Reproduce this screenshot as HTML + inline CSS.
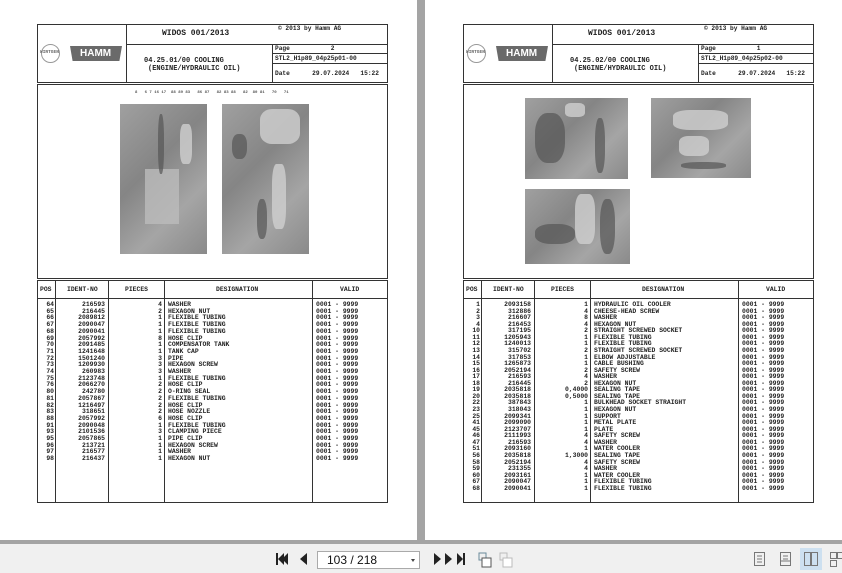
<!DOCTYPE html>
<html><head><meta charset="utf-8"><style>
*{margin:0;padding:0;box-sizing:border-box}
body{width:842px;height:573px;background:#fff;position:relative;overflow:hidden;font-family:"Liberation Mono",monospace}
.pg{position:absolute;top:0;width:416px;height:540px;background:#fff}
.a{position:absolute}
.b{position:absolute;border:1.3px solid #333}
.l{position:absolute;background:#333}
.t{position:absolute;font-weight:bold;font-size:6.4px;color:#222;white-space:pre;line-height:6.7px}
.h{position:absolute;font-weight:bold;color:#222;white-space:pre}
.ph{position:absolute;background:linear-gradient(135deg,#a0a0a0,#858585 40%,#a5a5a5 70%,#8a8a8a);}
.ph i{position:absolute;background:#555;border-radius:40%;opacity:.7}
.ph u{position:absolute;background:#d0d0d0;border-radius:30%;opacity:.8}
.tb{position:absolute;left:0;top:544px;width:842px;height:29px;background:#f0f0f0}
</style></head><body>

<div class="a" style="left:417px;top:0;width:8px;height:543px;background:#a4a4a4"></div>
<div class="a" style="left:0;top:540px;width:842px;height:4px;background:#a4a4a4"></div>

<!-- LEFT PAGE -->
<div class="pg" style="left:0">
 <div class="b" style="left:37px;top:24px;width:351px;height:59px"></div>
 <div class="l" style="left:126px;top:24px;width:1.3px;height:59px"></div>
 <div class="l" style="left:126px;top:44px;width:262px;height:1.3px"></div>
 <div class="l" style="left:272px;top:44px;width:1.3px;height:39px"></div>
 <div class="l" style="left:272px;top:53px;width:116px;height:1px"></div>
 <div class="l" style="left:272px;top:63px;width:116px;height:1px"></div>
 <div class="a" style="left:41px;top:44px;width:19px;height:19px;border:1px solid #999;border-radius:50%"></div>
 <div class="h" style="left:40px;top:50px;font-size:4.5px;color:#666">WIRTGEN</div>
 <div class="a" style="left:70px;top:46px;width:52px;height:15px;background:#6a6a6a;clip-path:polygon(0 0,100% 0,95% 100%,5% 100%)"></div>
 <div class="h" style="left:80px;top:48px;font-family:'Liberation Sans',sans-serif;font-size:10px;color:#fff">HAMM</div>
 <div class="h" style="left:162px;top:29px;font-size:8px">WIDOS 001/2013</div>
 <div class="h" style="left:278px;top:25px;font-size:6.2px">© 2013 by Hamm AG</div>
 <div class="h" style="left:275px;top:45px;font-size:6.2px">Page           2</div>
 <div class="h" style="left:275px;top:55px;font-size:6.2px">STL2_H1p89_04p25p01-00</div>
 <div class="h" style="left:275px;top:70px;font-size:6.2px">Date      29.07.2024   15:22</div>
 <div class="h" style="left:144px;top:57px;font-size:7px">04.25.01/00 COOLING</div>
 <div class="h" style="left:148px;top:65px;font-size:7px">(ENGINE/HYDRAULIC OIL)</div>

 <div class="b" style="left:37px;top:84px;width:351px;height:195px"></div>
 <div class="ph" style="left:120px;top:104px;width:87px;height:150px"><u style="left:25px;top:65px;width:34px;height:55px;border-radius:0;background:#bbb"></u><i style="left:38px;top:10px;width:6px;height:60px"></i><u style="left:60px;top:20px;width:12px;height:40px"></u></div>
 <div class="ph" style="left:222px;top:104px;width:87px;height:150px"><u style="left:38px;top:5px;width:40px;height:35px"></u><u style="left:50px;top:60px;width:14px;height:65px"></u><i style="left:10px;top:30px;width:15px;height:25px"></i><i style="left:35px;top:95px;width:10px;height:40px"></i></div>
 <div class="h" style="left:135px;top:91px;font-size:4px;color:#555">8   6 7 16 17  88 89 83   86 87   82 83 88   82  80 81   70   71</div>

 <div class="b" style="left:37px;top:280px;width:351px;height:223px"></div>
 <div class="l" style="left:37px;top:298px;width:351px;height:1px"></div>
 <div class="l" style="left:55px;top:280px;width:1.3px;height:223px"></div>
 <div class="l" style="left:108px;top:280px;width:1.3px;height:223px"></div>
 <div class="l" style="left:164px;top:280px;width:1.3px;height:223px"></div>
 <div class="l" style="left:312px;top:280px;width:1.3px;height:223px"></div>
 <div class="t" style="left:40px;top:287px">POS</div>
 <div class="t" style="left:67px;top:287px">IDENT-NO</div>
 <div class="t" style="left:125px;top:287px">PIECES</div>
 <div class="t" style="left:216px;top:287px">DESIGNATION</div>
 <div class="t" style="left:340px;top:287px">VALID</div>
 <div class="t" style="left:41px;top:302px;text-align:right;width:13px">64
65
66
67
68
69
70
71
72
73
74
75
76
80
81
82
83
88
91
93
95
96
97
98</div>
 <div class="t" style="left:60px;top:302px;text-align:right;width:45px">216593
216445
2089812
2090047
2090041
2057992
2091485
1241648
1501240
1209930
260983
2123748
2066270
242780
2057867
1216497
318651
2057992
2090048
2101536
2057865
213721
216577
216437</div>
 <div class="t" style="left:120px;top:302px;text-align:right;width:42px">4
2
1
1
1
8
1
1
3
3
3
1
2
2
2
2
2
6
1
3
1
1
1
1</div>
 <div class="t" style="left:168px;top:302px">WASHER
HEXAGON NUT
FLEXIBLE TUBING
FLEXIBLE TUBING
FLEXIBLE TUBING
HOSE CLIP
COMPENSATOR TANK
TANK CAP
PIPE
HEXAGON SCREW
WASHER
FLEXIBLE TUBING
HOSE CLIP
O-RING SEAL
FLEXIBLE TUBING
HOSE CLIP
HOSE NOZZLE
HOSE CLIP
FLEXIBLE TUBING
CLAMPING PIECE
PIPE CLIP
HEXAGON SCREW
WASHER
HEXAGON NUT</div>
 <div class="t" style="left:316px;top:302px">0001 - 9999
0001 - 9999
0001 - 9999
0001 - 9999
0001 - 9999
0001 - 9999
0001 - 9999
0001 - 9999
0001 - 9999
0001 - 9999
0001 - 9999
0001 - 9999
0001 - 9999
0001 - 9999
0001 - 9999
0001 - 9999
0001 - 9999
0001 - 9999
0001 - 9999
0001 - 9999
0001 - 9999
0001 - 9999
0001 - 9999
0001 - 9999</div>
</div>

<!-- RIGHT PAGE -->
<div class="pg" style="left:426px">
 <div class="b" style="left:37px;top:24px;width:351px;height:59px"></div>
 <div class="l" style="left:126px;top:24px;width:1.3px;height:59px"></div>
 <div class="l" style="left:126px;top:44px;width:262px;height:1.3px"></div>
 <div class="l" style="left:272px;top:44px;width:1.3px;height:39px"></div>
 <div class="l" style="left:272px;top:53px;width:116px;height:1px"></div>
 <div class="l" style="left:272px;top:63px;width:116px;height:1px"></div>
 <div class="a" style="left:41px;top:44px;width:19px;height:19px;border:1px solid #999;border-radius:50%"></div>
 <div class="h" style="left:40px;top:50px;font-size:4.5px;color:#666">WIRTGEN</div>
 <div class="a" style="left:70px;top:46px;width:52px;height:15px;background:#6a6a6a;clip-path:polygon(0 0,100% 0,95% 100%,5% 100%)"></div>
 <div class="h" style="left:80px;top:48px;font-family:'Liberation Sans',sans-serif;font-size:10px;color:#fff">HAMM</div>
 <div class="h" style="left:162px;top:29px;font-size:8px">WIDOS 001/2013</div>
 <div class="h" style="left:278px;top:25px;font-size:6.2px">© 2013 by Hamm AG</div>
 <div class="h" style="left:275px;top:45px;font-size:6.2px">Page           1</div>
 <div class="h" style="left:275px;top:55px;font-size:6.2px">STL2_H1p89_04p25p02-00</div>
 <div class="h" style="left:275px;top:70px;font-size:6.2px">Date      29.07.2024   15:22</div>
 <div class="h" style="left:144px;top:57px;font-size:7px">04.25.02/00 COOLING</div>
 <div class="h" style="left:148px;top:65px;font-size:7px">(ENGINE/HYDRAULIC OIL)</div>

 <div class="b" style="left:37px;top:84px;width:351px;height:195px"></div>
 <div class="ph" style="left:99px;top:98px;width:103px;height:81px"><i style="left:10px;top:15px;width:30px;height:50px"></i><u style="left:40px;top:5px;width:20px;height:14px"></u><i style="left:70px;top:20px;width:10px;height:55px"></i></div>
 <div class="ph" style="left:225px;top:98px;width:100px;height:80px"><u style="left:22px;top:12px;width:55px;height:20px"></u><u style="left:28px;top:38px;width:30px;height:20px"></u><i style="left:30px;top:64px;width:45px;height:7px"></i></div>
 <div class="ph" style="left:99px;top:189px;width:105px;height:75px"><u style="left:50px;top:5px;width:20px;height:50px"></u><i style="left:10px;top:35px;width:40px;height:20px"></i><i style="left:75px;top:10px;width:15px;height:55px"></i></div>

 <div class="b" style="left:37px;top:280px;width:351px;height:223px"></div>
 <div class="l" style="left:37px;top:298px;width:351px;height:1px"></div>
 <div class="l" style="left:55px;top:280px;width:1.3px;height:223px"></div>
 <div class="l" style="left:108px;top:280px;width:1.3px;height:223px"></div>
 <div class="l" style="left:164px;top:280px;width:1.3px;height:223px"></div>
 <div class="l" style="left:312px;top:280px;width:1.3px;height:223px"></div>
 <div class="t" style="left:40px;top:287px">POS</div>
 <div class="t" style="left:67px;top:287px">IDENT-NO</div>
 <div class="t" style="left:125px;top:287px">PIECES</div>
 <div class="t" style="left:216px;top:287px">DESIGNATION</div>
 <div class="t" style="left:340px;top:287px">VALID</div>
 <div class="t" style="left:41px;top:302px;line-height:6.56px;text-align:right;width:13px">1
2
3
4
10
11
12
13
14
15
16
17
18
19
20
22
23
25
41
45
46
47
51
56
58
59
60
67
68</div>
 <div class="t" style="left:60px;top:302px;line-height:6.56px;text-align:right;width:45px">2093158
312886
216607
216453
317195
1205943
1240013
315702
317853
1265873
2052194
216593
216445
2035818
2035818
387843
318043
2099341
2099090
2123707
2111993
216593
2093160
2035818
2052194
231355
2093161
2090047
2090041</div>
 <div class="t" style="left:120px;top:302px;line-height:6.56px;text-align:right;width:42px">1
4
8
4
2
1
1
2
1
1
2
4
2
0,4000
0,5000
1
1
1
1
1
4
4
1
1,3000
4
4
1
1
1</div>
 <div class="t" style="left:168px;top:302px;line-height:6.56px">HYDRAULIC OIL COOLER
CHEESE-HEAD SCREW
WASHER
HEXAGON NUT
STRAIGHT SCREWED SOCKET
FLEXIBLE TUBING
FLEXIBLE TUBING
STRAIGHT SCREWED SOCKET
ELBOW ADJUSTABLE
CABLE BUSHING
SAFETY SCREW
WASHER
HEXAGON NUT
SEALING TAPE
SEALING TAPE
BULKHEAD SOCKET STRAIGHT
HEXAGON NUT
SUPPORT
METAL PLATE
PLATE
SAFETY SCREW
WASHER
WATER COOLER
SEALING TAPE
SAFETY SCREW
WASHER
WATER COOLER
FLEXIBLE TUBING
FLEXIBLE TUBING</div>
 <div class="t" style="left:316px;top:302px;line-height:6.56px">0001 - 9999
0001 - 9999
0001 - 9999
0001 - 9999
0001 - 9999
0001 - 9999
0001 - 9999
0001 - 9999
0001 - 9999
0001 - 9999
0001 - 9999
0001 - 9999
0001 - 9999
0001 - 9999
0001 - 9999
0001 - 9999
0001 - 9999
0001 - 9999
0001 - 9999
0001 - 9999
0001 - 9999
0001 - 9999
0001 - 9999
0001 - 9999
0001 - 9999
0001 - 9999
0001 - 9999
0001 - 9999
0001 - 9999</div>
</div>

<!-- TOOLBAR -->
<div class="tb">
 <svg class="a" style="left:270px;top:6px" width="180" height="18">
  <rect x="6" y="3" width="2" height="12" fill="#222"/><polygon points="14,3 8,9 14,15" fill="#222"/><polygon points="18,3 12,9 18,15" fill="#222"/>
  <polygon points="37,3 30,9 37,15" fill="#222"/>
  <polygon points="164,3 171,9 164,15" fill="#222"/>
 </svg>
 <div class="a" style="left:317px;top:7px;width:103px;height:18px;background:#fff;border:1px solid #aaa"></div>
 <div class="h" style="left:327px;top:9px;font-family:'Liberation Sans',sans-serif;font-weight:normal;font-size:12px;color:#111">103 / 218</div>
 <div class="a" style="left:411px;top:15px;border-left:2.5px solid transparent;border-right:2.5px solid transparent;border-top:3px solid #444"></div>
 <svg class="a" style="left:443px;top:6px" width="70" height="18">
  <polygon points="2,3 9,9 2,15" fill="#222"/>
  <polygon points="14,3 20,9 14,15" fill="#222"/><rect x="20" y="3" width="2" height="12" fill="#222"/>
  <rect x="36" y="3" width="7" height="7" fill="none" stroke="#6a8a9a"/><rect x="39" y="8" width="9" height="9" fill="#fff" stroke="#555"/>
  <rect x="57" y="3" width="7" height="7" fill="none" stroke="#bbb"/><rect x="60" y="8" width="9" height="9" fill="#fff" stroke="#bbb"/>
 </svg>
 <div class="a" style="left:800px;top:4px;width:22px;height:22px;background:#cde0f0"></div>
 <svg class="a" style="left:750px;top:6px" width="92" height="18">
  <g fill="none" stroke="#777">
   <rect x="4.5" y="2.5" width="10" height="13"/><path d="M7 6h5M7 9h5M7 12h5"/>
   <rect x="30.5" y="2.5" width="10" height="13"/><path d="M33 6h5M33 9h5M30 11h11"/>
   <rect x="54.5" y="2.5" width="6" height="13"/><rect x="61.5" y="2.5" width="6" height="13"/>
   <rect x="80.5" y="2.5" width="6" height="6"/><rect x="87.5" y="2.5" width="6" height="6"/><rect x="80.5" y="10.5" width="6" height="6"/>
  </g>
 </svg>
</div>
</body></html>
